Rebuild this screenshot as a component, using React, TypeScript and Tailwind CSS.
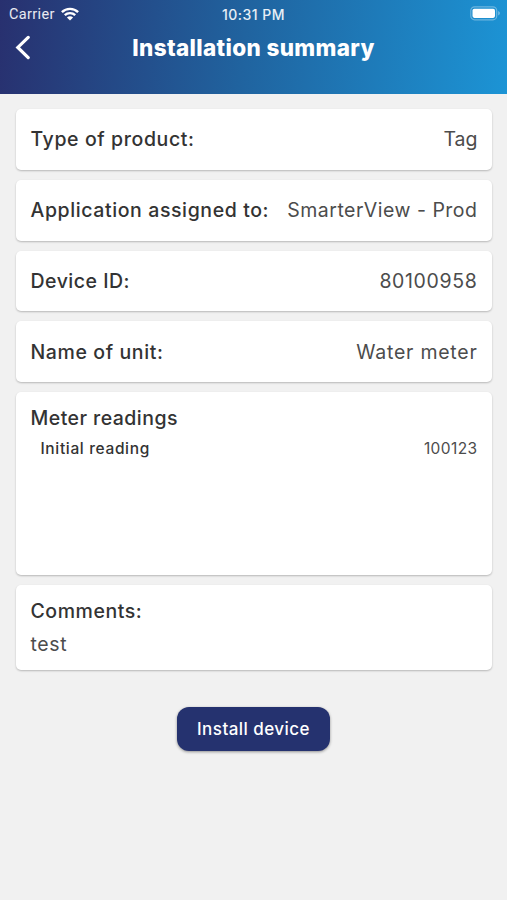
import clsx from "clsx";

const rows = [
  { label: "Type of product:", value: "Tag", labelClass: "tracking-[0.6px]", valueClass: "tracking-[0px]" },
  { label: "Application assigned to:", value: "SmarterView - Prod", labelClass: "tracking-[0.6px]", valueClass: "tracking-[0.5px]" },
  { label: "Device ID:", value: "80100958", labelClass: "tracking-[0.5px]", valueClass: "tracking-[0.65px]" },
  { label: "Name of unit:", value: "Water meter", labelClass: "tracking-[0.6px]", valueClass: "tracking-[0.75px]" },
];

const card = "rounded-[5px] bg-white shadow-[0_1px_2px_rgba(0,0,0,0.24)]";

function WifiIcon() {
  return (
    <svg width="18" height="14" viewBox="0 0 18 14" fill="none" stroke="#fff" strokeWidth="2.4">
      <path d="M0.9 5.2C5.4 0.7 12.6 0.7 17.1 5.2" />
      <path d="M3.8 8.2C6.7 5.4 11.3 5.4 14.2 8.2" />
      <path d="M9 13.6L5.9 10.5C7.6 8.9 10.4 8.9 12.1 10.5Z" fill="#fff" stroke="none" />
    </svg>
  );
}

function BatteryIcon() {
  return (
    <svg width="31" height="15" viewBox="0 0 31 15" fill="none">
      <rect x="0.8" y="0.8" width="25.9" height="13" rx="3.8" stroke="#fff" strokeOpacity="0.35" strokeWidth="1.2" />
      <rect x="2.5" y="2.7" width="22.5" height="9.2" rx="1.8" fill="#fff" />
      <path d="M28.2 5.1C30.4 6 30.4 8.6 28.2 9.5Z" fill="#fff" fillOpacity="0.4" />
    </svg>
  );
}

export default function App() {
  return (
    <div className="h-[900px] w-[507px] overflow-hidden bg-[#f1f1f1] font-['Inter',sans-serif] text-[#333333]">
      {/* Header */}
      <header className="h-[94px] bg-linear-[96deg,#28306f_0%,#20639f_48%,#1c94d5_100%] text-white">
        <div className="grid h-[27px] grid-cols-[1fr_auto_1fr] items-center px-[9px] text-[14px] text-white/90">
          <div className="flex items-center gap-[6px]">
            <span className="pt-[2px] font-['Roboto',sans-serif] text-[14.5px] tracking-[0.35px]">Carrier</span>
            <WifiIcon />
          </div>
          <span className="pt-px text-[14px] font-medium tracking-[0.45px]">10:31 PM</span>
          <div className="mr-[-3px] flex justify-end">
            <BatteryIcon />
          </div>
        </div>
        <div className="grid h-[41px] grid-cols-[1fr_auto_1fr] items-center px-[14px]">
          <svg width="16" height="26" viewBox="0 0 16 26" fill="none" stroke="#fff" strokeWidth="3.2" strokeLinecap="round">
            <path d="M14.2 2.4L3.8 12.4L14.2 22.6" />
          </svg>
          <h1 className="pt-px text-[22.5px] font-extrabold tracking-[0.35px]">Installation summary</h1>
        </div>
      </header>

      {/* Summary cards */}
      <main className="flex flex-col gap-[10px] px-[15.5px] pt-[15px]">
        {rows.map((row) => (
          <div key={row.label} className={clsx(card, "flex h-[60.75px] items-center justify-between pt-px pr-[14px] pl-[15px] text-[19.5px] whitespace-nowrap")}>
            <span className={clsx("font-medium", row.labelClass)}>{row.label}</span>
            <span className={clsx("font-normal text-[#4c4c4c]", row.valueClass)}>{row.value}</span>
          </div>
        ))}

        <div className={clsx(card, "h-[183px] pr-[14px] pl-[15px] pt-[12px]")}>
          <h2 className="text-[19.5px] leading-[28px] font-medium tracking-[0.45px]">Meter readings</h2>
          <div className="flex justify-between pt-[5px] pl-[10px] text-[15.5px] leading-[24px]">
            <span className="font-medium tracking-[0.65px]">Initial reading</span>
            <span className="font-normal tracking-[0.4px] text-[#4c4c4c]">100123</span>
          </div>
        </div>

        <div className={clsx(card, "h-[85px] px-[15px] pt-[12px]")}>
          <h2 className="text-[19.5px] leading-[28px] font-medium tracking-[0.55px]">Comments:</h2>
          <p className="pt-[5px] text-[19.5px] leading-[28px] font-normal tracking-[0.6px] text-[#4c4c4c]">test</p>
        </div>

        <button className="mx-auto mt-[27px] h-[44px] w-[153px] rounded-[12px] bg-[#25326f] pt-px text-[17px] font-medium tracking-[0.45px] text-white shadow-[0_1px_3px_rgba(0,0,0,0.4)]">
          Install device
        </button>
      </main>
    </div>
  );
}
